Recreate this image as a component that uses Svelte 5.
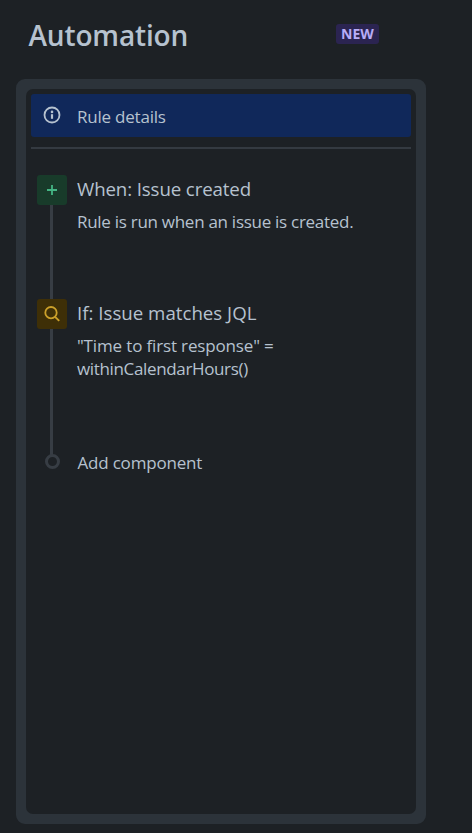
<script>
  const steps = [
    {
      kind: 'trigger',
      title: { text: 'When: Issue created', tracking: -0.12 },
      lines: [{ text: 'Rule is run when an issue is created.', tracking: -0.28 }]
    },
    {
      kind: 'condition',
      title: { text: 'If: Issue matches JQL', tracking: 0 },
      lines: [
        { text: '"Time to first response" =', tracking: -0.15 },
        { text: 'withinCalendarHours()', tracking: -0.35 }
      ]
    }
  ];
</script>

<main>
  <header>
    <h1>Automation</h1>
    <span class="badge">NEW</span>
  </header>

  <section class="panel">
    <div class="details">
      <svg class="info" width="18" height="18" viewBox="0 0 18 18" fill="none">
        <circle cx="9" cy="9" r="7.5" stroke="currentColor" stroke-width="1.8" />
        <circle cx="9" cy="5.9" r="1.3" fill="currentColor" />
        <path d="M9 8.2V12.8" stroke="currentColor" stroke-width="2.2" />
      </svg>
      <span>Rule details</span>
    </div>
    <hr />

    {#each steps as step}
      <div class="step {step.kind}">
        <div class="rail">
          <div class="tile">
            {#if step.kind === 'trigger'}
              <svg width="30" height="30" viewBox="0 0 30 30" fill="none">
                <path d="M15 10V20M10 15H20" stroke="currentColor" stroke-width="1.8" />
              </svg>
            {:else}
              <svg width="30" height="30" viewBox="0 0 30 30" fill="none">
                <circle cx="14" cy="13.7" r="5.7" stroke="currentColor" stroke-width="1.8" />
                <path d="M18.1 17.8L22.2 21.9" stroke="currentColor" stroke-width="1.9" />
              </svg>
            {/if}
          </div>
          <div class="line"></div>
        </div>
        <div class="body">
          <h2 style="letter-spacing: {step.title.tracking}px">{step.title.text}</h2>
          {#each step.lines as line}
            <p style="letter-spacing: {line.tracking}px">{line.text}</p>
          {/each}
        </div>
      </div>
    {/each}

    <div class="add">
      <div class="node"></div>
      <span>Add component</span>
    </div>
  </section>
</main>

<style>
  :global(body) {
    background: #1d2125;
  }
  main {
    box-sizing: border-box;
    height: 833px;
    padding: 0 46px 9px 16px;
    display: flex;
    flex-direction: column;
    overflow: hidden;
    color: #b6c2cf;
    background: #1d2125;
    font-family: 'Open Sans', 'Noto Sans', sans-serif;
    font-size: 17px;
    line-height: 23px;
    letter-spacing: -0.3px;
  }
  header {
    flex: none;
    height: 79px;
    padding: 0 47px 0 12.5px;
    box-sizing: border-box;
    display: flex;
    justify-content: space-between;
    align-items: flex-start;
  }
  h1 {
    margin: 15px 0 0;
    font-size: 28px;
    line-height: 40px;
    font-weight: 600;
    letter-spacing: -0.15px;
  }
  .badge {
    box-sizing: border-box;
    width: 43px;
    height: 20px;
    margin-top: 24px;
    border-radius: 3px;
    background: #2b2451;
    color: #b8acf6;
    font-size: 14px;
    line-height: 20px;
    font-weight: 700;
    letter-spacing: 0;
    text-align: center;
  }
  .panel {
    flex: 1;
    box-sizing: border-box;
    border: 10px solid #2c333a;
    border-radius: 9px;
    padding: 5px;
    background: #2c333a;
    display: flex;
    flex-direction: column;
    position: relative;
    z-index: 0;
  }
  .panel::before {
    content: '';
    position: absolute;
    inset: 0;
    z-index: -1;
    border-radius: 7px;
    background: #1d2125;
  }
  .details {
    height: 43px;
    padding-left: 12px;
    display: flex;
    align-items: center;
    gap: 16px;
    border-radius: 3px;
    background: #10285a;
    white-space: nowrap;
    letter-spacing: -0.22px;
  }
  .info {
    margin-bottom: 1px;
  }
  .details span {
    padding-top: 2px;
  }
  hr {
    width: 100%;
    height: 2px;
    margin: 10px 0 26px;
    border: 0;
    background: #343a41;
  }
  .step {
    display: flex;
    gap: 10px;
    padding-left: 6px;
    white-space: nowrap;
  }
  .trigger {
    height: 124px;
  }
  .condition {
    height: 155px;
  }
  .rail {
    width: 30px;
    display: flex;
    flex-direction: column;
  }
  .tile {
    width: 30px;
    height: 30px;
    flex: none;
    border-radius: 3px;
  }
  .tile svg {
    display: block;
  }
  .trigger .tile {
    background: #183b2a;
    color: #44b584;
  }
  .condition .tile {
    background: #3e2f07;
    color: #cba02a;
  }
  .line {
    flex: 1;
    width: 3px;
    margin-left: 13px;
    background: #373d44;
  }
  .condition .line {
    margin-bottom: -2px;
  }
  h2 {
    margin: 0 0 7px;
    font-size: 18.7px;
    line-height: 28px;
    font-weight: 400;
  }
  p {
    margin: 0;
  }
  .add {
    display: flex;
    align-items: flex-start;
    gap: 17.5px;
    padding-left: 14px;
    white-space: nowrap;
    letter-spacing: -0.2px;
  }
  .node {
    box-sizing: border-box;
    width: 15px;
    height: 15px;
    border: 3px solid #373d44;
    border-radius: 50%;
  }
  .add span {
    margin-top: -3px;
  }
</style>
